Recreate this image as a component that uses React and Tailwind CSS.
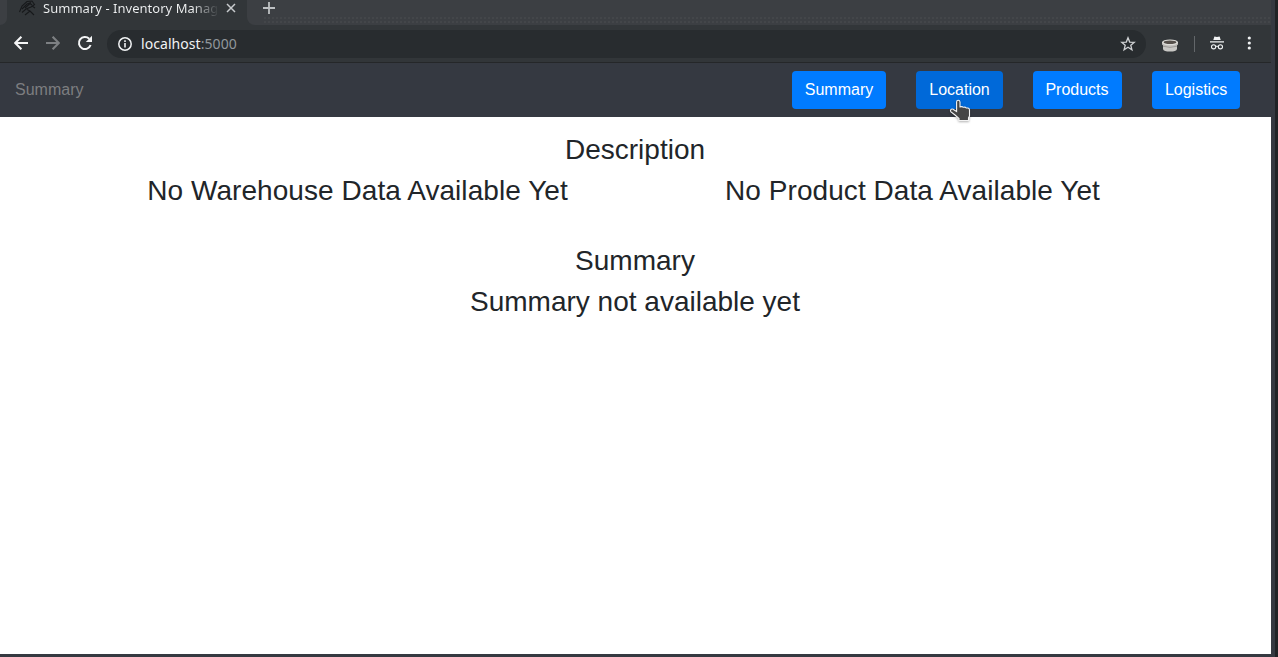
import React from "react";

const Glyph = ({ className, children, box = "0 0 24 24" }) => (
  <svg viewBox={box} className={`block shrink-0 ${className}`} aria-hidden="true">{children}</svg>
);

function TabStrip() {
  return (
    <div className="flex h-[25px] bg-[#3c3f43]">
      <div className="w-[247px] bg-[#323639] flex h-[25px]">
        <div className="w-[7px] h-[25px] bg-[#3c3f43] rounded-br-[8px]" />
        <Glyph className="w-[18px] h-[17px] ml-[11px]" box="0 0 18 17">
          <path d="M1.5 12L4 6L9 1.5L14 1L16.5 4.5L13 7L8 9L4 12.5M4 9L9 4L13 2.5M7 8L12 3.5L14 5M9 9.5L12 11L16 15M12 11L7 15M14 6L17 8" fill="none" stroke="#17191b" strokeWidth="1.1" />
        </Glyph>
        <div className="w-[176px] ml-[7px] -mt-[1px] h-[20px] whitespace-nowrap text-[13px] leading-[18px] tracking-[0.03px] bg-linear-to-r from-[#f1f3f4] from-[85%] to-[#323639] bg-clip-text text-transparent font-['Noto_Sans',sans-serif]">
          Summary - Inventory Manag
        </div>
        <Glyph className="w-[10px] h-[10px] mt-[3px] ml-[7px]" box="0 0 10 10">
          <path d="M1 1L9 9M9 1L1 9" stroke="#c8cbce" strokeWidth="1.5" />
        </Glyph>
      </div>
      <div className="grow bg-[#323639]">
        <div className="h-[25px] w-[1024px] overflow-hidden bg-[#3c3f43] rounded-bl-[8px] flex flex-col justify-between">
          <Glyph className="w-[12px] h-[12px] mt-[2px] ml-[16px]" box="0 0 12 12">
            <path d="M6 0V12M0 6H12" stroke="#bdc0c3" strokeWidth="1.8" />
          </Glyph>
          <div className="ml-[16px] h-[9px] bg-[radial-gradient(circle,#44474a_0.7px,transparent_0.8px)] bg-size-[4px_4px]" />
        </div>
      </div>
    </div>
  );
}

function Toolbar() {
  return (
    <div className="flex h-[38px] items-center bg-[#323639] border-b border-[#252729]">
      <Glyph className="w-[14px] h-[14px] ml-[14px] -mt-[1px]" box="0 0 14 14">
        <path d="M14 7H1.4M7.4 .7L1.2 7L7.4 13.3" fill="none" stroke="#f4f5f6" strokeWidth="2.1" />
      </Glyph>
      <Glyph className="w-[14px] h-[14px] ml-[18px] -mt-[1px]" box="0 0 14 14">
        <path d="M0 7H12.6M6.6 .7L12.8 7L6.6 13.3" fill="none" stroke="#7d8083" strokeWidth="2.1" />
      </Glyph>
      <Glyph className="w-[16px] h-[16px] ml-[17px] -mt-[2px]" box="0 0 16 16">
        <path d="M13.6 10A6 6 0 1 1 12.2 3.8" fill="none" stroke="#f4f5f6" strokeWidth="2" />
        <path d="M15 .8V7H8.8Z" fill="#f4f5f6" />
      </Glyph>
      <div className="ml-[14px] flex h-[28px] w-[1039px] items-center rounded-full bg-[#282c2f]">
        <Glyph className="w-[14px] h-[14px] ml-[11px]" box="0 0 14 14">
          <circle cx="7" cy="7" r="6.2" fill="none" stroke="#f1f3f4" strokeWidth="1.5" />
          <path d="M7 6V10.5M7 3.3V5" stroke="#f1f3f4" strokeWidth="1.6" />
        </Glyph>
        <div className="ml-[9px] grow text-[14px] leading-[20px] tracking-[0.06px] text-[#f1f3f4] font-['Noto_Sans',sans-serif]">
          localhost<span className="text-[#91979c]">:5000</span>
        </div>
        <Glyph className="w-[16px] h-[16px] mr-[10px]" box="0 0 16 16">
          <path d="M8 1.8L9.7 6.1L14.2 6.4L10.8 9.3L11.9 13.7L8 11.3L4.1 13.7L5.2 9.3L1.8 6.4L6.3 6.1Z" fill="none" stroke="#cfd1d3" strokeWidth="1.35" />
        </Glyph>
      </div>
      <Glyph className="w-[16px] h-[13px] ml-[16px] mt-[3px]" box="0 0 16 13">
        <path d="M1 5V10Q1.6 12.6 8 12.6T15 10V5Z" fill="#c8c7c4" />
        <path d="M0 3V5.5Q1 7.4 8 7.4T16 5.5V3Z" fill="#bdbbb8" />
        <ellipse cx="8" cy="3.4" rx="8" ry="2.9" fill="#dddcd8" />
        <ellipse cx="8" cy="3.2" rx="6.4" ry="1.8" fill="#554f4a" />
        <path d="M1 7.2Q8 9.6 15 7.2" fill="none" stroke="#918e8a" strokeWidth=".8" />
      </Glyph>
      <div className="w-px h-[16px] ml-[16px] bg-[#63676a]" />
      <Glyph className="w-[14px] h-[14px] ml-[15px] -mt-[1px]" box="0 0 14 14">
        <path d="M3.3 3.9L4.4 .4L7 1L9.6 .4L10.7 3.9Z M0 5.2H14V6.5H0Z" fill="#f1f3f4" />
        <circle cx="3.6" cy="10.8" r="2.1" fill="none" stroke="#f1f3f4" strokeWidth="1.1" />
        <circle cx="10.4" cy="10.8" r="2.1" fill="none" stroke="#f1f3f4" strokeWidth="1.1" />
        <path d="M5.8 10.5Q7 9.8 8.2 10.5" fill="none" stroke="#f1f3f4" />
      </Glyph>
      <Glyph className="w-[4px] h-[14px] ml-[23px] -mt-[1px]" box="0 0 4 14">
        <circle cx="2.3" cy="2" r="1.6" fill="#f1f3f4" />
        <circle cx="2.3" cy="7" r="1.6" fill="#f1f3f4" />
        <circle cx="2.3" cy="12" r="1.6" fill="#f1f3f4" />
      </Glyph>
    </div>
  );
}

function NavBar() {
  return (
    <nav className="flex h-[54px] items-center bg-[#353941] pl-[15px] pr-[31px] text-[16px] leading-[24px] text-white">
      <div className="grow text-[#7d7e80]">Summary</div>
      <div className="flex gap-[30px]">
        <button className="h-[38px] w-[94px] rounded-[4px] bg-[#007bff]">Summary</button>
        <button className="relative h-[38px] w-[87px] rounded-[4px] bg-[#0069d9]">
          Location
          <Glyph className="absolute left-[33px] top-[28px] w-[22px] h-[24px] drop-shadow-[0_1px_1px_rgba(0,0,0,0.3)]" box="0 0 22 24">
            <path d="M7.6 3Q7.6 1.2 9.2 1.2T11 3V7.8L13 7.6L14 8.3L16 8.1L17.2 9L19 9Q20.5 9.2 20.5 11V17L19.5 19V21.5H10V19.5L6 16L1.7 12.6Q.9 11 2.3 10.2Q3.8 9.7 5.2 11L7.6 12.5Z" fill="#454545" stroke="#f4f4f4" strokeWidth="1.1" />
          </Glyph>
        </button>
        <button className="h-[38px] w-[89px] rounded-[4px] bg-[#007bff] pr-[1px]">Products</button>
        <button className="h-[38px] w-[88px] rounded-[4px] bg-[#007bff]">Logistics</button>
      </div>
    </nav>
  );
}

export default function App() {
  return (
    <div className="flex h-[657px] w-[1278px] overflow-hidden bg-[#353941] font-['Liberation_Sans',Arial,sans-serif]">
      <div className="flex w-[1271px] flex-col">
        <TabStrip />
        <Toolbar />
        <NavBar />
        <main className="h-[537px] bg-white pt-[16px] pr-[1px] text-center text-[28px] leading-[33px] text-[#212529]">
          <h3 className="mb-[8px]">Description</h3>
          <div className="flex px-[80px] tracking-[0.06px]">
            <h3 className="w-[555px]">No Warehouse Data Available Yet</h3>
            <h3 className="w-[555px]">No Product Data Available Yet</h3>
          </div>
          <h3 className="mt-[37px] mb-[8px]">Summary</h3>
          <h3>Summary not available yet</h3>
        </main>
      </div>
      <div className="w-[4px] bg-[#353941]" />
      <div className="w-[3px] bg-[#202326]" />
    </div>
  );
}
